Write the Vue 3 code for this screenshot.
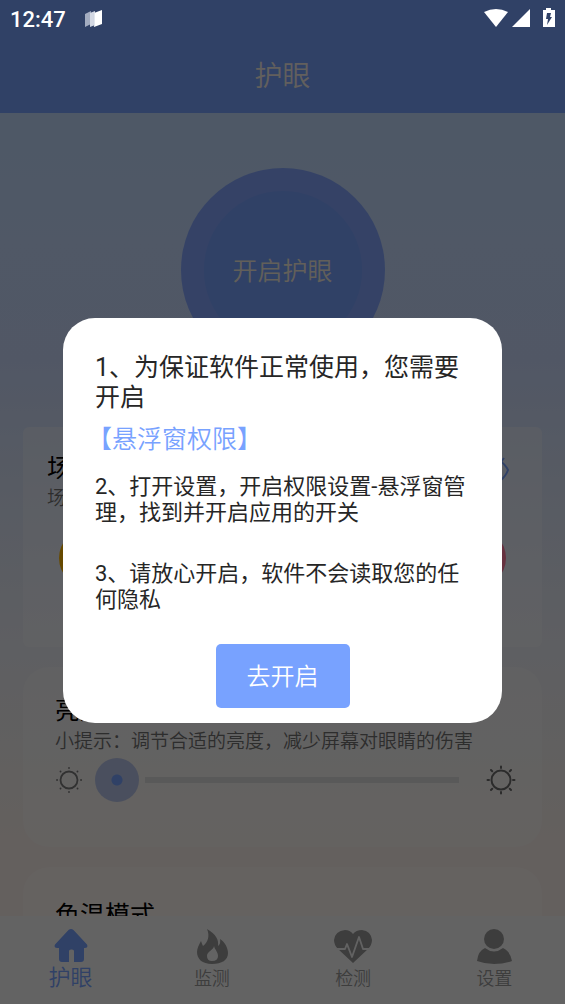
<script setup>
import { ref } from 'vue'

const brightness = ref(0)
const active = ref('护眼')
const tabs = ['护眼', '监测', '检测', '设置']
</script>

<template>
  <div class="screen">
    <div class="status">
      <span class="time">12:47</span>
      <svg class="app-icon" width="18" height="18" viewBox="0 0 18 18">
        <path d="M0 4L6 1V14L0 17Z" fill="#a3acc0" />
        <path d="M5 3L10 1V15L5 17Z" fill="#d3d8e3" />
        <path d="M9 3L17 0V14L9 17Z" fill="#fff" />
        <path d="M9.300 3V16.500" stroke="#c3cad8" stroke-width=".6" />
      </svg>
      <svg class="signals" width="72" height="22" viewBox="0 0 72 22">
        <path d="M0 4Q12-2 24 4L12 19Z" fill="#fff" />
        <path d="M28 19L46 1V19Z" fill="#fff" />
        <path d="M59 2h3V0h5v2h4v17H59Z" fill="#fff" />
        <path d="M63 5h4l-1 4h2l-5 8 1-6h-2Z" fill="#304166" />
      </svg>
    </div>

    <header class="header"><h1>护眼</h1></header>

    <main class="content">
      <button class="power" type="button"><span>开启护眼</span></button>

      <section class="card scenes">
        <div class="card-head">
          <h2>场景模式</h2>
          <svg width="36" height="26" viewBox="0 0 36 26" fill="none" stroke="#78a2ff" stroke-width="2">
            <path d="M2 14Q8 4 18 4H24Q30 8 33 14Q31 20 25 25H10Q4 21 2 14ZM26 6L29 2" />
            <circle cx="18" cy="14" r="8" />
          </svg>
        </div>
        <p>场景选择</p>
        <div class="dots"><i class="dot amber"></i><i class="dot pink"></i></div>
      </section>

      <section class="card brightness">
        <h2>亮度调节</h2>
        <p>小提示：调节合适的亮度，减少屏幕对眼睛的伤害</p>
        <div class="slider-row">
          <svg width="28" height="28" viewBox="0 0 28 28" fill="none" stroke="#7a7a7a" stroke-width="1.800" stroke-linecap="round">
            <circle cx="14" cy="14" r="8.500" />
            <path d="M14 2v.1M14 26v.1M2 14h.1M26 14h.1M5.500 5.500l.1.1M22.500 22.500l.1.1M22.500 5.500l-.1.1M5.500 22.500l.1-.1" />
          </svg>
          <input v-model="brightness" class="slider" type="range" min="0" max="100" aria-label="亮度" />
          <svg width="30" height="30" viewBox="0 0 30 30" fill="none" stroke="#6c6c6c" stroke-width="2" stroke-linecap="round">
            <circle cx="15" cy="15" r="9.500" />
            <path d="M15 1.500v1.500M15 27v1.500M1.500 15h1.500M27 15h1.500M5 5l1.200 1.200M23.800 23.800L25 25M25 5l-1.200 1.200M5 25l1.200-1.200" />
          </svg>
        </div>
      </section>

      <section class="card colour"><h2>色温模式</h2></section>
    </main>

    <nav class="tabs">
      <button v-for="t in tabs" :key="t" type="button" :class="{ on: active === t }" @click="active = t">
        <svg v-if="t === '护眼'" width="36" height="36" viewBox="0 0 36 36">
          <path d="M15.500 1Q18-1 20.500 1L34 15.500Q35.500 19 32 19H31V30Q31 33 28 33H21V22Q21 20.500 19 20.500H18Q16 20.500 16 22V33H9Q6 33 6 30V19H4Q.5 19 2 15.500Z" fill="currentColor" />
        </svg>
        <svg v-else-if="t === '监测'" width="36" height="36" viewBox="0 0 36 36">
          <path d="M13 0C22 5 25 11 24 17Q27 15 26 10C31 13 34 19 34 24C34 31 28 35 18 35C8 35 3 30 3 23C3 19 5 16 7 12Q8 15 9 17C14 13 16 7 13 0ZM20 17C20 21 13 22 13 27Q13 32 18 32Q24 32 24 27C24 23 21 21 20 17Z" fill="currentColor" fill-rule="evenodd" />
        </svg>
        <svg v-else-if="t === '检测'" width="40" height="36" viewBox="0 0 40 36">
          <path d="M20 34L5 20Q1 16 1 11Q2 2 12 1Q17 1 20 5Q23 1 29 1Q38 2 39 11Q39 16 35 20Z" fill="currentColor" />
          <path d="M3 20H12L14 15L19 28L26 8L30 20H37" fill="none" stroke="#f6f6f6" stroke-width="1.800" stroke-linejoin="round" />
        </svg>
        <svg v-else width="36" height="36" viewBox="0 0 36 36">
          <circle cx="18" cy="10" r="10" fill="currentColor" />
          <path d="M9 19Q18 26 27 19Q34 22 36 32Q27 35 18 35Q9 35 1 32Q2 22 9 19Z" fill="currentColor" />
        </svg>
        <span>{{ t }}</span>
      </button>
    </nav>

    <div class="overlay">
      <div class="dialog" role="dialog" aria-modal="true" aria-label="权限">
        <p class="lead">1、为保证软件正常使用，您需要开启</p>
        <p class="perm">【悬浮窗权限】</p>
        <p class="step">2、打开设置，开启权限设置-悬浮窗管理，找到并开启应用的开关</p>
        <p class="step last">3、请放心开启，软件不会读取您的任何隐私</p>
        <button class="go" type="button">去开启</button>
      </div>
    </div>
  </div>
</template>

<style>
body { margin: 0; }
</style>

<style scoped>
* { box-sizing: border-box; }
h1, h2, p { margin: 0; font-weight: inherit; }
button { border: 0; padding: 0; font: inherit; cursor: pointer; }
.screen {
  position: relative;
  display: flex;
  flex-direction: column;
  height: 100vh;
  overflow: hidden;
  font-family: Roboto, "Noto Sans CJK SC", sans-serif;
  font-weight: 350;
  background: linear-gradient(180deg, #c3dcff 12%, #cbdafd 36%, #d7e2f8 46%, #ebedf5 64%, #f2efef 74%, #fbefea 86%);
}
.status {
  position: absolute;
  inset: 0 0 auto;
  z-index: 3;
  display: flex;
  align-items: center;
  height: 38px;
  padding: 0 10px;
  color: #fff;
}
.time { font-size: 22px; font-weight: 500; line-height: 40px; padding-top: 2px; }
.app-icon { margin-left: 19px; }
.signals { margin-left: auto; margin-right: -1px; }
.header {
  flex: none;
  height: 113px;
  padding-top: 38px;
  background: #78a2ff;
  text-align: center;
}
.header h1 { font-size: 28px; line-height: 78px; color: #f4eee8; }
.content { flex: 1; min-height: 0; overflow: hidden; padding: 55px 23px 0; }
.power {
  display: flex;
  width: 204px;
  height: 204px;
  margin: 0 auto 55px;
  padding: 23px;
  border-radius: 50%;
  background: #84a6ff;
}
.power span {
  flex: 1;
  border-radius: 50%;
  background: #78a2ff;
  color: #f4eee0;
  font-size: 25px;
  line-height: 161px;
}
.card { background: rgba(255, 255, 255, .3); border-radius: 26px; margin-bottom: 20px; }
.card h2 { font-size: 25px; font-weight: 400; line-height: 38px; color: #000; }
.card p { font-size: 19px; line-height: 26px; color: #707070; }
.scenes { height: 220px; padding: 23px 31px 0 24px; border-radius: 6px; }
.card-head { display: flex; justify-content: space-between; align-items: center; }
.scenes p { line-height: 22px; }
.dots { display: flex; justify-content: space-between; padding: 18px 5px 0 12px; }
.dot { width: 60px; height: 60px; border-radius: 50%; }
.amber { background: #ffb700; }
.pink { background: #ff7a9e; }
.brightness { height: 180px; padding: 25px 26px 0 32px; }
.brightness p { line-height: 24px; }
.slider-row { display: flex; align-items: center; margin-top: 4px; }
.slider {
  appearance: none;
  flex: 1;
  min-width: 0;
  height: 44px;
  margin: 0 27px 0 12px;
  background: linear-gradient(#dfdfdf, #dfdfdf) 50px center / 100% 6px no-repeat;
}
.slider::-webkit-slider-thumb {
  appearance: none;
  width: 44px;
  height: 44px;
  border-radius: 50%;
  background: radial-gradient(circle, #78a2ff 5px, #b9c6ea 6px);
}
.colour { height: 180px; padding: 30px 32px; }
.tabs {
  flex: none;
  display: grid;
  grid-template-columns: repeat(4, 1fr);
  height: 88px;
  background: #f8f8f8;
}
.tabs button {
  display: flex;
  flex-direction: column;
  align-items: center;
  padding-top: 13px;
  background: none;
  color: #999;
  font-size: 18px;
  line-height: 28px;
}
.tabs svg { flex: none; color: #999; }
.tabs .on, .tabs .on svg { color: #78a2ff; }
.tabs .on { font-size: 22px; line-height: 26px; }
.overlay {
  position: absolute;
  inset: 0;
  z-index: 2;
  display: flex;
  align-items: center;
  padding: 37px 63px 0;
  background: rgba(0, 0, 0, .6);
}
.dialog {
  flex: 1;
  padding: 35px 32px 15px;
  border-radius: 32px;
  background: #fff;
  color: #262626;
}
.lead { font-size: 25px; font-weight: 400; line-height: 30px; }
.perm { margin: 9px 0 17px -8px; font-size: 25px; line-height: 35px; color: #78a2ff; }
.step { font-size: 22px; font-weight: 400; line-height: 26px; }
.last { margin: 35px 0 31px; }
.go {
  display: block;
  width: 134px;
  height: 64px;
  margin: 0 auto;
  padding-bottom: 3px;
  border-radius: 5px;
  background: #78a2ff;
  color: #fff;
  font-size: 24px;
}
</style>
